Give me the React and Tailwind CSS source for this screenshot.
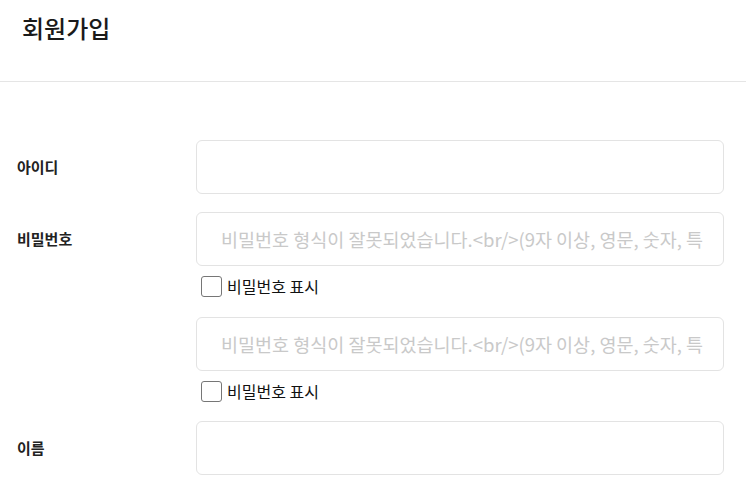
const font = { fontFamily: '"Noto Sans CJK KR", "Noto Sans", sans-serif' };

const PLACEHOLDER = '비밀번호 형식이 잘못되었습니다.<br/>(9자 이상, 영문, 숫자, 특수문자 조합)';

const Field = ({ type = 'text', placeholder }) => (
  <input
    type={type}
    placeholder={placeholder}
    className="block w-full h-[54px] rounded-[6px] border border-[#e3e3e3] bg-white pl-[24px] pr-[20px] text-[18.5px] text-[#222] placeholder:text-[#c9c9c9] outline-none"
  />
);

const ShowPassword = () => (
  <label className="mt-[10px] h-[21px] flex items-center gap-[5px] pl-[5px] text-[16px] leading-[21px] text-[#111]">
    <input
      type="checkbox"
      className="appearance-none w-[21px] h-[21px] rounded-[3px] border border-[#767676] bg-white"
    />
    <span>비밀번호 표시</span>
  </label>
);

export default function App() {
  return (
    <div className="w-[746px] min-h-[485px] bg-white" style={font}>
      {/* Header */}
      <div className="h-[82px] border-b border-[#e5e5e5] pl-[22px] pt-[11px]">
        <h1 className="text-[24px] font-medium text-[#1a1a1a] leading-[34px]">회원가입</h1>
      </div>

      {/* Form */}
      <div className="pt-[58px] pl-[17px] pr-[22px] flex flex-col">
        <div className="flex items-center">
          <div className="w-[179px] text-[15px] font-bold text-[#222]">아이디</div>
          <div className="flex-1">
            <Field />
          </div>
        </div>

        <div className="mt-[18px] flex items-start">
          <div className="w-[179px] h-[54px] flex items-center text-[15px] font-bold text-[#222]">비밀번호</div>
          <div className="flex-1">
            <Field type="password" placeholder={PLACEHOLDER} />
            <ShowPassword />
          </div>
        </div>

        <div className="mt-[20px] flex items-start">
          <div className="w-[179px]" />
          <div className="flex-1">
            <Field type="password" placeholder={PLACEHOLDER} />
            <ShowPassword />
          </div>
        </div>

        <div className="mt-[19px] flex items-center">
          <div className="w-[179px] text-[15px] font-bold text-[#222]">이름</div>
          <div className="flex-1">
            <Field />
          </div>
        </div>
      </div>
    </div>
  );
}
